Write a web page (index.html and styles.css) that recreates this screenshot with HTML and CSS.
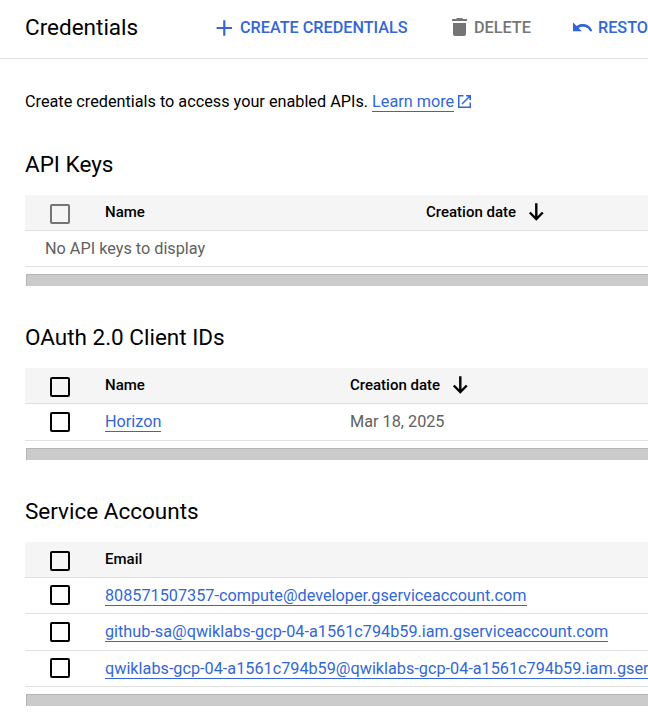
FILE: index.html
```html
<!DOCTYPE html>
<html lang="en">
<head>
<meta charset="utf-8">
<title>Credentials</title>
<link rel="stylesheet" href="styles.css">
</head>
<body>
<header class="bar">
  <h1 class="bar-title">Credentials</h1>
  <button class="action create"><svg class="icon-plus" width="16" height="16" viewBox="0 0 16 16"><path d="M7.200 0.300h2.200V6.900H16v2.200H9.400v6.600H7.200V9.100H.6V6.900h6.600z"/></svg>CREATE CREDENTIALS</button>
  <button class="action delete"><svg class="icon-trash" width="16" height="18" viewBox="0 0 16 18"><path d="M1 5h13v11a2 2 0 0 1-2 2H3a2 2 0 0 1-2-2zM0 1h4l1-1h5l1 1h4v2H0z"/></svg>DELETE</button>
  <button class="action restore"><svg class="icon-undo" width="20" height="10" viewBox="0 0 20 10"><path d="M0 .5v8.800h8.800L5.600 6A8 8 0 0 1 17.300 9.600L19.300 8.900A10 10 0 0 0 3.600 4z"/></svg>RESTORE</button>
</header>
<main class="content">
  <p class="intro">Create credentials to access your enabled APIs. <a class="link">Learn more</a><svg class="icon-open" width="13" height="13" viewBox="0 0 13 13"><path d="M5.500.75H.75v11.500h11.500V7.500M8 .75h4.250V5M12.250.75L4 9"/></svg></p>

  <section class="group">
    <h2 class="heading">API Keys</h2>
    <div class="row head wide"><span class="check muted"></span><span>Name</span><span class="sort">Creation date<svg class="icon-down" width="16" height="18" viewBox="0 0 16 18"><path d="M8.300 .3v15.500M1.800 9.500L8.300 16l6.500-6.500"/></svg></span></div>
    <div class="row empty">No API keys to display</div>
    <div class="scroll"></div>
  </section>

  <section class="group">
    <h2 class="heading">OAuth 2.0 Client IDs</h2>
    <div class="row head"><span class="check"></span><span>Name</span><span class="sort">Creation date<svg class="icon-down" width="16" height="18" viewBox="0 0 16 18"><path d="M8.300 .3v15.500M1.800 9.500L8.300 16l6.500-6.500"/></svg></span></div>
    <div class="row tall"><span class="check"></span><span><a class="link">Horizon</a></span><span>Mar 18, 2025</span></div>
    <div class="scroll"></div>
  </section>

  <section class="group">
    <h2 class="heading">Service Accounts</h2>
    <div class="row head"><span class="check"></span><span>Email</span></div>
    <div class="row"><span class="check"></span><span><a class="link">808571507357-compute@developer.gserviceaccount.com</a></span></div>
    <div class="row tall"><span class="check"></span><span><a class="link">github-sa@qwiklabs-gcp-04-a1561c794b59.iam.gserviceaccount.com</a></span></div>
    <div class="row"><span class="check"></span><span><a class="link">qwiklabs-gcp-04-a1561c794b59@qwiklabs-gcp-04-a1561c794b59.iam.gserviceaccount.com</a></span></div>
    <div class="scroll"></div>
  </section>
</main>
</body>
</html>
```
FILE: styles.css
```css
* { box-sizing: border-box; }
body {
  margin: 0;
  height: 717px;
  overflow: hidden;
  background: #fff;
  color: #000;
  font: 16.245px/24px Roboto, sans-serif;
}
svg { flex: none; fill: currentColor; }
.bar {
  display: flex;
  align-items: center;
  height: 59px;
  padding: 0 0 4px 25px;
  border-bottom: 1px solid #e0e0e0;
  overflow: hidden;
  white-space: nowrap;
}
.bar-title {
  flex: none;
  width: 191px;
  margin: 0;
  font-size: 22.5px;
  font-weight: 400;
}
.action {
  display: flex;
  flex: none;
  align-items: center;
  gap: 8px;
  padding: 1px 0 0;
  border: 0;
  background: none;
  color: #3367d6;
  font: 500 16.22px/25px Roboto, sans-serif;
}
.create { width: 236px; }
.delete { width: 121px; gap: 6px; color: #757575; }
.restore { gap: 5px; }
.icon-trash { margin-top: -1px; }
.icon-undo { margin-top: -1px; }
.content { padding-left: 25px; overflow: hidden; }
.intro {
  height: 24px;
  margin: 31px 0 38px;
  white-space: nowrap;
}
.link {
  display: inline-block;
  height: 20px;
  border-bottom: 1px solid #3367d6;
  color: #3367d6;
  line-height: 20px;
}
.icon-open {
  margin-left: 4px;
  color: #3367d6;
  fill: none;
  stroke: currentColor;
  stroke-width: 1.5;
  vertical-align: -1px;
}
.group { height: 173px; }
.group + .group { height: 174px; }
.group:last-child { height: auto; }
.heading {
  height: 43px;
  margin: 0;
  font-size: 22.5px;
  font-weight: 400;
  line-height: 25px;
}
.row {
  display: grid;
  grid-template-columns: 55px 245px 1fr;
  height: 36px;
  padding-left: 25px;
  border-bottom: 1px solid #e0e0e0;
  color: #616161;
  line-height: 35px;
  white-space: nowrap;
}
.tall { height: 37px; }
.wide { grid-template-columns: 55px 321px 1fr; }
.head {
  background: #f5f5f5;
  color: #000;
  font-size: 15px;
  font-weight: 500;
}
.empty { display: block; padding-left: 20px; }
.check {
  width: 20px;
  height: 20px;
  margin-top: 7px;
  border: 2px solid #000;
  border-radius: 2px;
}
.tall .check { margin-top: 8px; }
.head .check { margin-top: 9px; }
.muted { border-color: #757575; }
.sort { display: flex; gap: 12px; }
.icon-down {
  margin-top: 8px;
  fill: none;
  stroke: #000;
  stroke-width: 2.4;
}
.scroll {
  height: 12px;
  margin: 7px 0 0 1px;
  border-top: 1px solid #b5b5b5;
  border-left: 1px solid #b5b5b5;
  background: #cbcbcb;
}
```
